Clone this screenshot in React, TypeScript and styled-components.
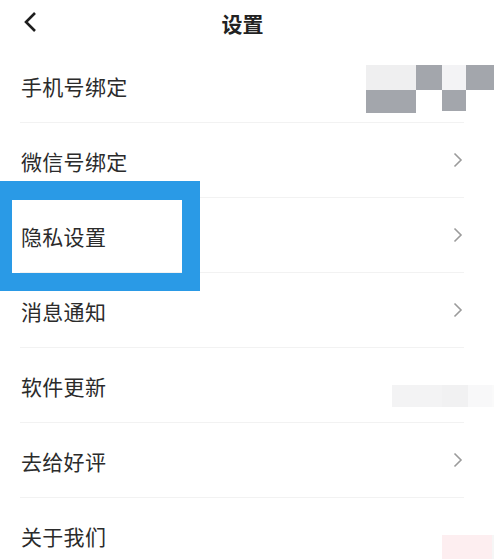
import React from 'react';
import styled, {createGlobalStyle} from 'styled-components';

const GlobalStyle = createGlobalStyle`
  html, body {
    margin: 0;
    padding: 0;
    background: #ffffff;
  }
  body {
    font-family: "Noto Sans CJK SC", "Noto Sans", sans-serif;
    -webkit-font-smoothing: antialiased;
  }
`;

const Page = styled.div`
  position: relative;
  width: 494px;
  height: 559px;
  overflow: hidden;
  background: #fff;
`;

const Header = styled.div`
  position: relative;
  height: 48px;
  display: flex;
  align-items: center;
  justify-content: center;
`;

const BackButton = styled.button`
  position: absolute;
  left: 18px;
  top: 8px;
  width: 24px;
  height: 28px;
  padding: 0;
  border: none;
  background: none;
  display: flex;
  align-items: center;
  justify-content: center;
`;

const Title = styled.h1`
  margin: 0 9px 2px 0;
  font-size: 21px;
  font-weight: 700;
  color: #222;
`;

const List = styled.ul`
  list-style: none;
  margin: 0;
  padding: 0 30px 0 20px;
`;

const Row = styled.li`
  height: 74px;
  display: flex;
  align-items: center;
  justify-content: space-between;
  border-bottom: 1px solid #f2f2f2;
`;

const Label = styled.span`
  padding-left: 1px;
  font-size: 21px;
  color: #2b2b2b;
  letter-spacing: 0.3px;
  margin-top: 2px;
`;

const Highlight = styled.div`
  position: absolute;
  left: 0;
  top: 181px;
  width: 200px;
  height: 110px;
  box-sizing: border-box;
  border-style: solid;
  border-color: #2a9ae6;
  border-width: 19px 18px 18px 12px;
  pointer-events: none;
`;

const Mosaic = styled.div<{$top: number; $left: number}>`
  position: absolute;
  top: ${p => p.$top}px;
  left: ${p => p.$left}px;
  display: grid;
  grid-template-columns: 50px 26px 24px 28px;
  grid-auto-rows: auto;
`;

const Tile = styled.div<{$c: string; $h: number}>`
  height: ${p => p.$h}px;
  background: ${p => p.$c};
`;

const ChevronRight = () => (
  <svg width="12" height="16" viewBox="0 0 12 16">
    <polyline points="2.5,1.5 9,8 2.5,14.5" fill="none" stroke="#9b9b9b" strokeWidth="1.6" />
  </svg>
);

const items = [
  {label: '手机号绑定', arrow: false},
  {label: '微信号绑定', arrow: true},
  {label: '隐私设置', arrow: true},
  {label: '消息通知', arrow: true},
  {label: '软件更新', arrow: false},
  {label: '去给好评', arrow: true},
  {label: '关于我们', arrow: false},
];

const G = '#a3a6ac';

export default function App() {
  return (
    <Page>
      <GlobalStyle />
      <Header>
        <BackButton aria-label="返回">
          <svg width="16" height="22" viewBox="0 0 16 22">
            <polyline points="13,2 4,11 13,20" fill="none" stroke="#1e1e1e" strokeWidth="2.6" />
          </svg>
        </BackButton>
        <Title>设置</Title>
      </Header>
      <List>
        {items.map(it => (
          <Row key={it.label}>
            <Label>{it.label}</Label>
            {it.arrow && <ChevronRight />}
          </Row>
        ))}
      </List>

      <Mosaic $top={65} $left={366}>
        <Tile $c="#efeff0" $h={25} />
        <Tile $c={G} $h={25} />
        <Tile $c="#f3f3f5" $h={25} />
        <Tile $c={G} $h={25} />
        <Tile $c={G} $h={23} />
        <Tile $c="#ffffff" $h={23} />
        <Tile $c={G} $h={21} />
        <Tile $c="#ffffff" $h={23} />
      </Mosaic>

      <Mosaic $top={385} $left={392}>
        <Tile $c="#f3f3f4" $h={22} />
        <Tile $c="#f1f1f2" $h={22} />
        <Tile $c="#f8f8f9" $h={22} />
        <Tile $c="#fafafa" $h={22} />
      </Mosaic>

      <Mosaic $top={535} $left={442}>
        <Tile $c="#fdeef0" $h={24} />
        <Tile $c="#f6f6f6" $h={24} />
      </Mosaic>

      <Highlight />
    </Page>
  );
}
